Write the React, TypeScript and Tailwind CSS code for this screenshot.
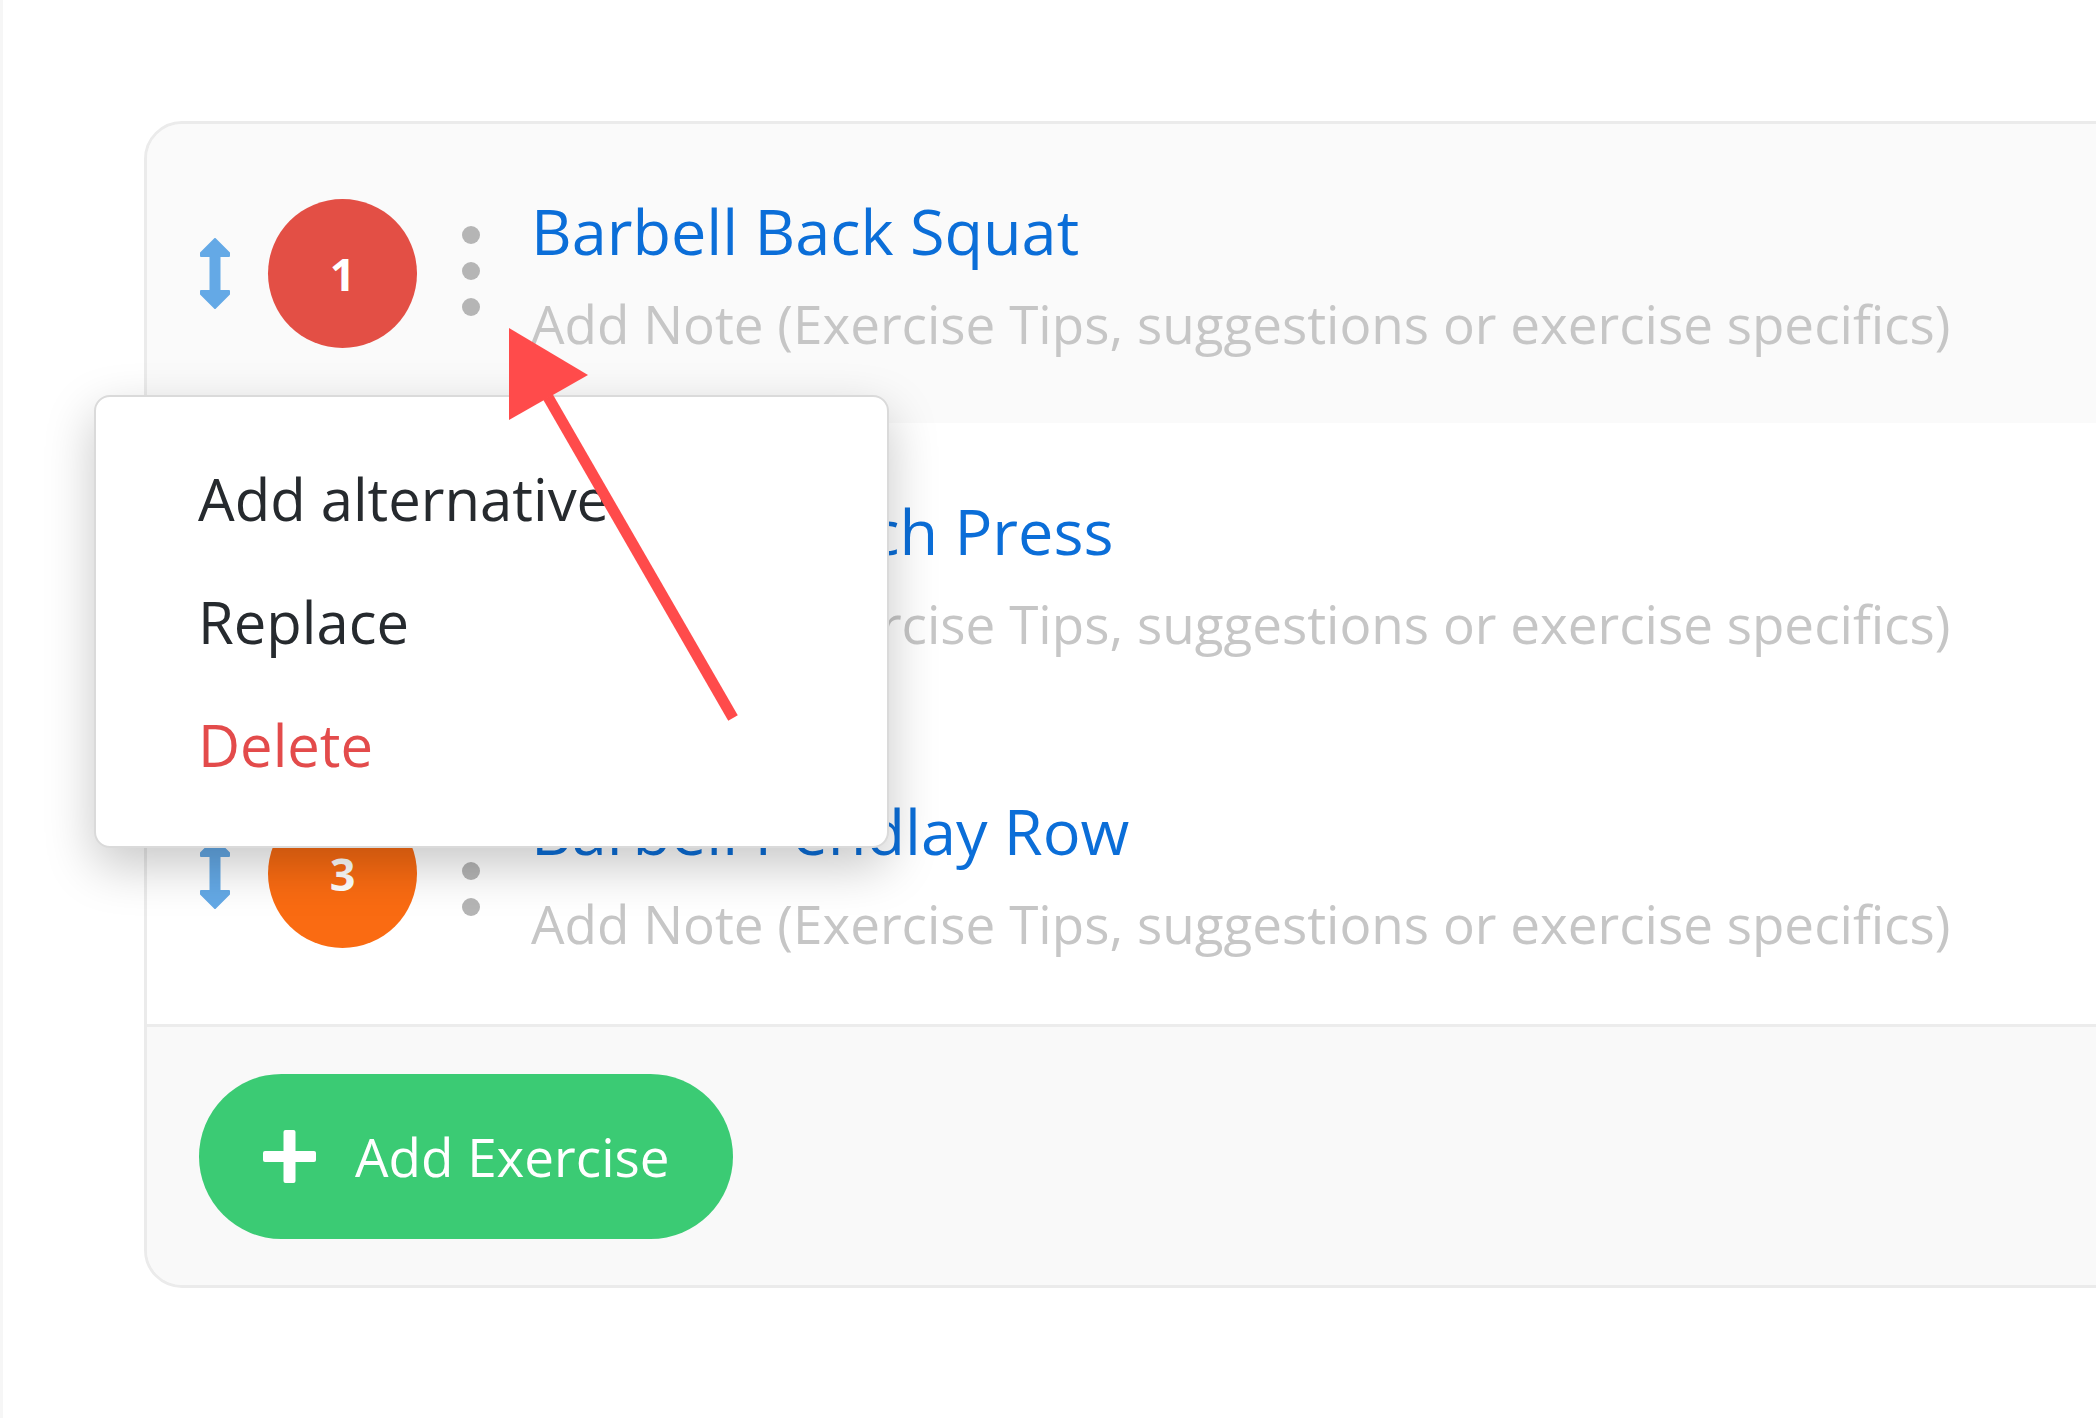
import React from "react";

function DragArrow() {
  return (
    <svg width="30" height="71" viewBox="0 0 30 71" className="shrink-0">
      <g fill="#64a9e6" stroke="#64a9e6" strokeWidth="2" strokeLinejoin="round">
        <polygon points="15,1 1,15 1,18 29,18 29,15" />
        <rect x="9.5" y="17" width="11" height="37" strokeWidth="0" />
        <polygon points="15,70 1,56 1,53 29,53 29,56" />
      </g>
    </svg>
  );
}

function Dots() {
  return (
    <div className="flex flex-col gap-[18px] shrink-0 -mt-[6px]">
      <div className="w-[18px] h-[18px] rounded-full bg-[#b5b5b5]" />
      <div className="w-[18px] h-[18px] rounded-full bg-[#b5b5b5]" />
      <div className="w-[18px] h-[18px] rounded-full bg-[#b5b5b5]" />
    </div>
  );
}

function Row({
  num,
  color,
  title,
  rowClass,
}: {
  num: string;
  color: string;
  title: string;
  rowClass: string;
}) {
  return (
    <div className={`flex items-center pl-[53px] ${rowClass}`}>
      <DragArrow />
      <div
        className={`ml-[38px] w-[149px] h-[149px] rounded-full flex items-center justify-center text-white font-bold text-[45px] shrink-0 ${color}`}
      >
        {num}
      </div>
      <div className="ml-[45px]">
        <Dots />
      </div>
      <div className="ml-[51px] flex flex-col pt-[4px] whitespace-nowrap">
        <div className="text-[63px] leading-[72px] text-[#0b6ed8]">{title}</div>
        <div className="mt-[25px] text-[53px] leading-[64px] text-[#c6c6c6]">
          Add Note (Exercise Tips, suggestions or exercise specifics)
        </div>
      </div>
    </div>
  );
}

export default function App() {
  return (
    <div className="relative w-[2096px] h-[1418px] overflow-hidden bg-white shadow-[inset_3px_0_0_#f6f6f6] pl-[144px] pt-[121px] font-['Open_Sans',sans-serif]">
      <div className="w-[2100px] border-[3px] border-[#ebebeb] rounded-[38px] bg-[#fafafa] overflow-hidden">
        <Row num="1" color="bg-[#e34f45]" title="Barbell Back Squat" rowClass="h-[299px] bg-[#fafafa]" />
        <Row num="2" color="bg-[#f2a33a]" title="Barbell Bench Press" rowClass="h-[300px] bg-white" />
        <Row num="3" color="bg-[#fa6b12]" title="Barbell Pendlay Row" rowClass="h-[301px] bg-white" />
        <div className="h-[261px] border-t-[3px] border-[#ececec] bg-[#f9f9f9] flex items-center pl-[52px]">
          <button className="w-[534px] h-[165px] rounded-full bg-[#3bcb74] flex items-center pl-[64px] text-white">
            <svg width="53" height="53" viewBox="0 0 53 53" className="shrink-0">
              <rect x="20.5" y="0" width="12" height="53" rx="2" fill="#ffffff" />
              <rect x="0" y="21" width="53" height="11" rx="2" fill="#ffffff" />
            </svg>
            <span className="ml-[39px] text-[53px] leading-none whitespace-nowrap">Add Exercise</span>
          </button>
        </div>
      </div>

      <div className="absolute left-[94px] top-[395px] w-[795px] h-[453px] bg-white border-2 border-[#dadada] rounded-[16px] shadow-[0_18px_50px_rgba(0,0,0,0.22)] pl-[102px] pt-[40px]">
        <div className="text-[58px] leading-[123px] text-[#262a2e] whitespace-nowrap">Add alternative</div>
        <div className="text-[58px] leading-[123px] text-[#262a2e] whitespace-nowrap">Replace</div>
        <div className="text-[58px] leading-[123px] text-[#e34b4b] whitespace-nowrap">Delete</div>
      </div>

      <svg
        className="absolute left-0 top-0 pointer-events-none"
        width="2096"
        height="1418"
        viewBox="0 0 2096 1418"
      >
        <line x1="548" y1="397" x2="733" y2="718" stroke="#ff4b4b" strokeWidth="11" />
        <polygon points="509,328 509,420 588,375" fill="#ff4b4b" />
      </svg>
    </div>
  );
}
